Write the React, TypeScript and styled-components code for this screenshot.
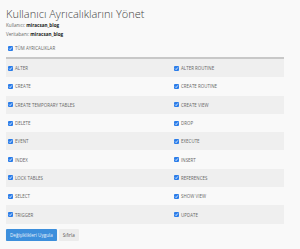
import React, { FC } from "react";
import styled, { createGlobalStyle } from "styled-components";

const GlobalStyle = createGlobalStyle`
  body {
    margin: 0;
    background: #f9f9f9;
    font-family: "Open Sans", "Liberation Sans", sans-serif;
  }
`;

const PageEl = styled.div`
  padding: 5px 16px 0 6px;
`;

const TitleEl = styled.h1`
  margin: 0;
  padding-top: 1px;
  font-size: 11px;
  font-weight: 300;
  line-height: 15px;
  color: #3f3f3f;
`;

const InfoEl = styled.div`
  font-size: 4.6px;
  line-height: 9px;
  color: #666;
  & b {
    color: #222;
    font-weight: 700;
  }
`;

const InfoListEl = styled.div`
  margin-top: 0;
`;

const AllRowEl = styled.label`
  display: flex;
  align-items: center;
  height: 14px;
  margin-top: 2px;
  padding-left: 2px;
`;

const TableEl = styled.div`
  margin-top: 2px;
  border-top: 2px solid #c8c8c8;
`;

const RowEl = styled.div<{ $odd: boolean }>`
  display: grid;
  grid-template-columns: 166px 1fr;
  height: 18.3px;
  align-items: center;
  background: ${(p) => (p.$odd ? "#efefef" : "#f9f9f9")};
`;

const CellEl = styled.label`
  display: flex;
  align-items: center;
  padding-left: 2px;
`;

const BoxEl = styled.span`
  display: inline-flex;
  width: 5px;
  height: 5px;
  border-radius: 1px;
  background: #2b7de9;
  margin-right: 2px;
  flex-shrink: 0;
`;

const LabelEl = styled.span`
  font-size: 4.4px;
  color: #666;
  text-transform: uppercase;
  letter-spacing: 0.05px;
`;

const ActionsEl = styled.div`
  display: flex;
  gap: 2px;
  margin-top: 5px;
`;

const ButtonEl = styled.button<{ $primary?: boolean }>`
  height: 12px;
  padding: 0 4px;
  border: 0;
  border-radius: 1px;
  font-family: "Open Sans", "Liberation Sans", sans-serif;
  font-size: 4.6px;
  color: ${(p) => (p.$primary ? "#e8f1fb" : "#555")};
  background: ${(p) => (p.$primary ? "#3d8fdc" : "#ececec")};
  box-shadow: ${(p) => (p.$primary ? "0 1px 1px rgba(0,0,0,0.15)" : "none")};
`;

const Check: FC = () => (
  <BoxEl>
    <svg width="5" height="5" viewBox="0 0 10 10">
      <path d="M2.2 5.2 L4.2 7.2 L7.8 2.8" stroke="#fff" strokeWidth="1.6" fill="none" />
    </svg>
  </BoxEl>
);

const privileges: [string, string][] = [
  ["ALTER", "ALTER ROUTINE"],
  ["CREATE", "CREATE ROUTINE"],
  ["CREATE TEMPORARY TABLES", "CREATE VIEW"],
  ["DELETE", "DROP"],
  ["EVENT", "EXECUTE"],
  ["INDEX", "INSERT"],
  ["LOCK TABLES", "REFERENCES"],
  ["SELECT", "SHOW VIEW"],
  ["TRIGGER", "UPDATE"],
];

const App: FC = () => {
  return (
    <PageEl>
      <GlobalStyle />
      <TitleEl>Kullanıcı Ayrıcalıklarını Yönet</TitleEl>
      <InfoListEl>
        <InfoEl>
          Kullanıcı: <b>miracsan_blog</b>
        </InfoEl>
        <InfoEl>
          Veritabanı: <b>miracsan_blog</b>
        </InfoEl>
      </InfoListEl>
      <AllRowEl>
        <Check />
        <LabelEl>Tüm Ayrıcalıklar</LabelEl>
      </AllRowEl>
      <TableEl>
        {privileges.map((pair, index) => (
          <RowEl $odd={index % 2 === 0} key={index}>
            {pair.map((name) => (
              <CellEl key={name}>
                <Check />
                <LabelEl>{name}</LabelEl>
              </CellEl>
            ))}
          </RowEl>
        ))}
      </TableEl>
      <ActionsEl>
        <ButtonEl $primary>Değişiklikleri Uygula</ButtonEl>
        <ButtonEl>Sıfırla</ButtonEl>
      </ActionsEl>
    </PageEl>
  );
};

export default App;
